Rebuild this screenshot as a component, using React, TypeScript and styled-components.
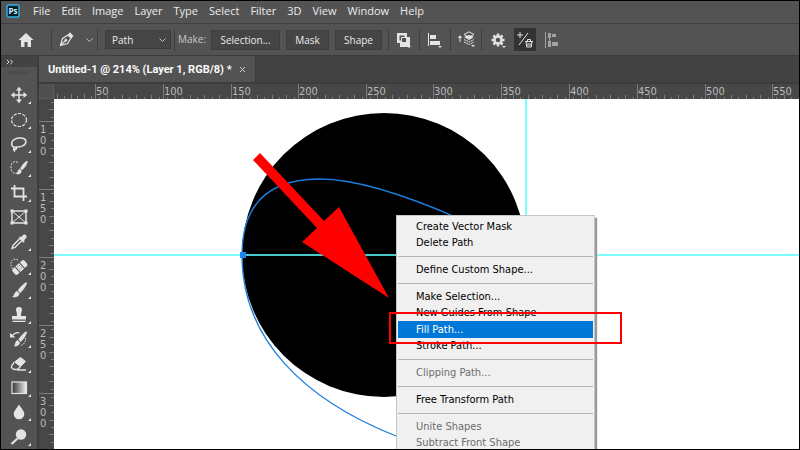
import React from "react";
import styled, { createGlobalStyle } from "styled-components";

const ui = `"Open Sans", "Noto Sans", sans-serif`;
const compact = `"DejaVu Sans Condensed", "DejaVu Sans", sans-serif`;

const Global = createGlobalStyle`
  * { box-sizing: border-box; }
  body { margin: 0; background: #000; font-family: ${ui}; }
  button, select { font: inherit; color: inherit; border: 0; margin: 0; padding: 0; background: none; border-radius: 0; }
  svg { display: block; }
`;

const Window = styled.div`
  height: 100vh;
  display: flex;
  flex-direction: column;
  border: 1px solid #000;
  background: #424242;
  color: #ececec;
  overflow: hidden;
`;

const MenuBar = styled.nav`
  flex: none;
  height: 23px;
  display: flex;
  align-items: center;
  padding: 0 0 2px 5px;
  background: #535353;
  border-bottom: 1px solid #404040;
`;

const MenuItems = styled.div`
  display: flex;
  gap: 11px;
  margin-left: 13px;
`;

const MenuButton = styled.button`
  font-size: 11px;
  font-weight: 500;
  line-height: 20px;
`;

const OptionsBar = styled.div`
  flex: none;
  height: 32px;
  display: flex;
  align-items: center;
  background: #535353;
  border-bottom: 1px solid #3c3c3c;
`;

const Divider = styled.span`
  flex: none;
  width: 1px;
  height: 22px;
  background: #3f3f3f;
`;

const IconButton = styled.button<{ $width: number; $active?: boolean }>`
  flex: none;
  width: ${(p) => p.$width}px;
  height: 23px;
  display: flex;
  align-items: center;
  justify-content: center;
  background: ${(p) => (p.$active ? "#333" : "transparent")};
`;

const SelectBox = styled.div`
  flex: none;
  display: grid;
  align-items: center;
  width: 64px;
  height: 17px;
  margin: 0 4px 0 8px;
  background: #454545;
  outline: 1px solid #3d3d3d;
  & > * { grid-area: 1 / 1; }
  & > svg { justify-self: end; margin-right: 3px; pointer-events: none; }
`;

const ModeSelect = styled.select`
  appearance: none;
  width: 100%;
  height: 17px;
  padding-left: 6px;
  font-size: 10px;
  line-height: 16px;
`;

const OptionLabel = styled.span`
  width: 33px;
  margin: 0 0 1px 3px;
  font-size: 10px;
  color: #c8c8c8;
`;

const ActionButton = styled.button<{ $width: number }>`
  flex: none;
  width: ${(p) => p.$width}px;
  height: 20px;
  margin-right: 6px;
  background: #454545;
  border: 1px solid #3d3d3d;
  font-size: 10px;
  line-height: 16px;
`;

const Workspace = styled.div`
  flex: 1;
  min-height: 0;
  display: flex;
`;

const Toolbox = styled.aside`
  flex: none;
  width: 38px;
  display: flex;
  flex-direction: column;
  background: #535353;
  border-right: 2px solid #3c3c3c;
`;

const ToolboxHeader = styled.button`
  height: 11px;
  flex: none;
  background: #434343;
  padding-left: 5px;
`;

const Grip = styled.span`
  flex: none;
  height: 3px;
  width: 20px;
  margin: 4px 0 9px 8px;
  background: repeating-linear-gradient(90deg, #454545 0 1px, transparent 1px 2px);
`;

const Tool = styled.button`
  flex: 1 1 0;
  min-height: 24px;
  max-height: 32px;
  display: flex;
  align-items: center;
  padding-left: 7px;
`;

const DocumentArea = styled.main`
  flex: 1;
  min-width: 0;
  display: flex;
  flex-direction: column;
`;

const TabStrip = styled.div`
  flex: none;
  height: 28px;
  display: flex;
  border-bottom: 2px solid #3c3c3c;
`;

const DocumentTab = styled.div`
  display: flex;
  align-items: center;
  gap: 7px;
  padding: 0 9px;
  background: #535353;
  border-right: 1px solid #3c3c3c;
  font-family: Roboto, ${ui};
  font-size: 11px;
  font-weight: 700;
  color: #fafafa;
  white-space: nowrap;
`;

const CloseButton = styled.button`
  padding-top: 1px;
`;

const RulerRow = styled.div`
  flex: none;
  height: 15px;
  display: flex;
  background: #474747;
`;

const RulerCorner = styled.div`
  flex: none;
  width: 15px;
  border-right: 1px dotted #6a6a6a;
  border-bottom: 1px dotted #6a6a6a;
  background: #505050;
`;

const HRuler = styled.div`
  flex: 1;
  min-width: 0;
  display: flex;
  overflow: hidden;
`;

const HSegment = styled.div<{ $size: number }>`
  flex: none;
  width: ${(p) => p.$size}px;
  display: grid;
  border-left: 1px solid #7c7c7c;
  & > * { grid-area: 1 / 1; }
`;

const HLead = styled(HSegment)`
  border-left: 0;
`;

const HTicks = styled.div`
  display: flex;
  align-items: flex-end;
  justify-content: space-around;
`;

const HTick = styled.i<{ $long: boolean }>`
  width: 1px;
  height: ${(p) => (p.$long ? 5 : 3)}px;
  background: #7c7c7c;
`;

const HLabel = styled.span`
  justify-self: start;
  align-self: start;
  font-family: ${compact};
  font-size: 11px;
  line-height: 16px;
  color: #bababa;
`;

const CanvasRow = styled.div`
  flex: 1;
  min-height: 0;
  display: flex;
`;

const VRuler = styled.div`
  flex: none;
  width: 15px;
  display: flex;
  flex-direction: column;
  overflow: hidden;
  background: #474747;
`;

const VSegment = styled.div<{ $size: number }>`
  flex: none;
  height: ${(p) => p.$size}px;
  display: flex;
  justify-content: space-between;
  border-top: 1px solid #7c7c7c;
`;

const VLead = styled(VSegment)`
  border-top: 0;
  justify-content: flex-end;
`;

const VTicks = styled.div`
  display: flex;
  flex-direction: column;
  align-items: flex-end;
  justify-content: space-around;
`;

const VTick = styled.i<{ $long: boolean }>`
  height: 1px;
  width: ${(p) => (p.$long ? 5 : 3)}px;
  background: #7c7c7c;
`;

const VLabel = styled.span`
  width: 8px;
  padding: 2px 0 0 1px;
  font-family: ${compact};
  font-size: 11px;
  line-height: 11px;
  color: #bababa;
  word-break: break-all;
`;

const Canvas = styled.section`
  position: relative;
  flex: 1;
  min-width: 0;
  overflow: hidden;
  background: #fff;
`;

const Artwork = styled.svg`
  position: absolute;
  top: 0;
  left: 0;
  width: 100%;
  height: 100%;
`;

const ContextMenu = styled.div`
  position: absolute;
  top: 116px;
  left: 342px;
  width: 199px;
  padding: 3px 1px;
  background: #f0f0f0;
  border: 1px solid #c4c4c4;
  box-shadow: 2px 3px 1px #999;
  font-family: ${compact};
  font-size: 11px;
  color: #000;
`;

const ContextItem = styled.button<{ $selected?: boolean }>`
  display: block;
  width: 100%;
  height: ${(p) => (p.$selected ? 17 : 16)}px;
  padding-left: 18px;
  text-align: left;
  line-height: 16px;
  white-space: nowrap;
  color: ${(p) => (p.$selected ? "#fff" : "#000")};
  background: ${(p) => (p.$selected ? "#0078d7" : "transparent")};
  &:disabled { color: #6d6d6d; }
`;

const Separator = styled.hr`
  height: 1px;
  margin: 5px 0;
  border: 0;
  background: #b4b4b4;
`;

const Highlight = styled.div`
  position: absolute;
  top: 213px;
  left: 335px;
  width: 233px;
  height: 32px;
  border: 2px solid #f00;
  pointer-events: none;
`;

const INK = "#e4e4e4";
const Corner = ({ x, y }: { x: number; y: number }) => (
  <path d={`M${x} ${y}v-3l-3 3z`} fill={INK} />
);

const Chevron = () => (
  <svg width="9" height="6" viewBox="0 0 9 6" fill="none" stroke="#c0c0c0">
    <path d="M1.5 1.5l3 3 3-3" />
  </svg>
);

const toolIcons: [string, React.ReactNode][] = [
  ["Move", <g><path d="M11 4v14M4 11h14" strokeWidth="1.500" /><path d="M8 6.500l3-3.700 3 3.700zM8 15.500l3 3.700 3-3.700zM6.500 8L2.800 11l3.700 3zM15.500 8l3.700 3-3.700 3z" fill={INK} stroke="none" /></g>],
  ["Elliptical marquee", <ellipse cx="11" cy="11" rx="7.500" ry="6.500" strokeWidth="1.200" strokeDasharray="3.200 1.300" />],
  ["Lasso", <path strokeWidth="1.500" d="M6.500 14.500C3 13 2.500 8.500 6.500 6.300c4-2.200 10.500-1.600 11.300 1.500.8 3.600-4 6.400-8.300 6.200-3-.2-4 .5-3.500 1.800.5 1 2.500 1 2.500-.3s-2.200-1.500-2.800 0c-.4 1.400.4 2 1.300 3" />],
  ["Quick selection", <g><path d="M10 5.500C6 3.500 3 5.500 3 10s2 7 6 6" strokeDasharray="2 1.200" /><path d="M18.800 4l.8.800c-1 3.200-3 6.200-5.600 8.200l-1.600-1.600c1.500-3 3.600-5.600 6.400-7.400zM11.600 12l1.900 1.900c-.3 2.700-2.500 3.600-5 3.100 1.500-.8 1-4.200 3.100-5z" fill={INK} strokeWidth=".4" /></g>],
  ["Crop", <path strokeWidth="1.800" d="M6.500 3v11.500H19M3 6.500h12.500V19" />],
  ["Frame", <g><rect x="4" y="5" width="14" height="12" strokeWidth="1.500" /><path d="M4 5l14 12M18 5l-14 12" /><path d="M2.500 3.500h3v3h-3zM16.500 3.500h3v3h-3zM2.500 15.500h3v3h-3zM16.500 15.500h3v3h-3z" fill={INK} stroke="none" /></g>],
  ["Eyedropper", <g><path d="M17.500 4c1.200 1 1 2.500 0 3.500l-1.800 1.700.8 1-1.200 1.200-4.500-4.500L12 5.700l1 .8 1.500-1.700c1-1 2-1.500 3-.8z" fill={INK} strokeWidth=".5" /><path d="M11.500 8L5 14.500l-1 3 3-1 6.500-6.500" strokeWidth="1.400" /></g>],
  ["Healing brush", <g><path d="M10 5C6 3 3 5 3 8.500S4 13 5 13.500" strokeDasharray="1.500 1.200" /><g transform="rotate(-42 12 12)"><rect x="3.500" y="8.500" width="16" height="7.500" rx="2" fill={INK} stroke="none" /><path d="M8.500 8v9M14.500 8v9" stroke="#535353" /><path d="M10.500 10.500h.1M12.500 10.500h.1M10.500 13.500h.1M12.500 13.500h.1" stroke="#535353" strokeLinecap="round" /></g></g>],
  ["Brush", <path fill={INK} strokeWidth=".5" d="M18 3.500l.8.700c-1.500 3.800-3.900 7.200-6.600 9.500L10 11.500c2-3 4.500-6 8-8zM9.100 12.300l2.200 2.200c-.5 3-3.300 4-6.800 3.500 2-1 1.600-4.800 4.600-5.700z" />],
  ["Clone stamp", <path fill={INK} stroke="none" d="M11 3c2.400 0 3.400 1.700 2.900 3.400-.7 2-1.200 3.800-.7 5.600H18v3.500H4V12h4.800c.5-1.800 0-3.600-.7-5.600C7.600 4.700 8.600 3 11 3zM4.500 16.700h13V18h-13z" />],
  ["History brush", <g><path d="M4 8c3-4 6-3.500 7.500-3" strokeWidth="1.200" /><path d="M2 5v4.500h5.500z" fill={INK} stroke="none" /><path d="M18 3.500l.8.700c-1 3.800-3.400 7.200-6.100 9.500l-2.200-2.200c2-3 4.500-6 7.500-8zM9.600 12.300l2.200 2.200c-.5 3-3.300 4-5.800 3.500 2-1 .6-4.800 3.600-5.700z" fill={INK} strokeWidth=".4" /><path d="M17.500 10c.5 4-2 7-5 7.500" strokeDasharray="1.500 1" /></g>],
  ["Eraser", <g><path d="M12.500 4.500l5 4-5 5-6-4.500z" fill={INK} stroke={INK} strokeLinejoin="round" /><path d="M6 9.500L3.500 13c-.5 1 0 1.500.5 2l2 1.500h3.500l3-3M9.500 17H18" strokeWidth="1.300" /></g>],
  ["Gradient", <g><defs><linearGradient id="toolGradient"><stop stopColor="#333" /><stop offset="1" stopColor="#eee" /></linearGradient></defs><rect x="4" y="5" width="14.500" height="11.500" strokeWidth="1.200" fill="url(#toolGradient)" /></g>],
  ["Blur", <path fill={INK} stroke="none" d="M11 3.500c2.500 4 5.300 6.500 5.300 9.500a5.300 5.300 0 01-10.600 0c0-3 2.800-5.500 5.300-9.500z" />],
  ["Dodge", <g><circle cx="13" cy="8.500" r="5.200" fill={INK} stroke="none" /><path d="M9.500 12.500l-6 5.500" strokeWidth="2.200" /></g>],
];

const contextItems: ({ text: string; disabled?: boolean; selected?: boolean } | null)[] = [
  { text: "Create Vector Mask" },
  { text: "Delete Path" },
  null,
  { text: "Define Custom Shape..." },
  null,
  { text: "Make Selection..." },
  { text: "New Guides From Shape" },
  { text: "Fill Path...", selected: true },
  { text: "Stroke Path..." },
  null,
  { text: "Clipping Path...", disabled: true },
  null,
  { text: "Free Transform Path" },
  null,
  { text: "Unite Shapes", disabled: true },
  { text: "Subtract Front Shape", disabled: true },
];

const columns: [number, number][] = [
  [50, 68], [100, 68], [150, 67], [200, 68], [250, 67], [300, 68],
  [350, 68], [400, 68], [450, 68], [500, 67], [550, 68],
];
const rows: [number, number][] = [[100, 68], [150, 68], [200, 68], [250, 68], [300, 68]];
const ticks = [false, true, false, true, false, true, false, true, false];

export default function App() {
  return (
    <Window>
      <Global />
      <MenuBar>
        <svg width="14" height="14" viewBox="0 0 14 14" aria-label="Photoshop">
          <rect x="1" y="1" width="12" height="12" rx="2" fill="#001d2c" stroke="#2fb4e4" strokeWidth="1.400" />
          <text x="7" y="10" textAnchor="middle" fontFamily="Open Sans" fontWeight="700" fontSize="8" fill="#d6f2ff">Ps</text>
        </svg>
        <MenuItems>
          {["File", "Edit", "Image", "Layer", "Type", "Select", "Filter", "3D", "View", "Window", "Help"].map((m) => (
            <MenuButton key={m}>{m}</MenuButton>
          ))}
        </MenuItems>
      </MenuBar>

      <OptionsBar>
        <IconButton $width={50} aria-label="Home">
          <svg width="16" height="14" viewBox="0 0 16 14" fill={INK}><path d="M8 0l7.500 7H13v7H9.500V9h-3v5H3V7H.5z" /></svg>
        </IconButton>
        <Divider />
        <IconButton $width={29} aria-label="Pen tool">
          <svg width="15" height="15" viewBox="0 0 15 15" fill="none" stroke={INK}>
            <path d="M1.500 13.500L3.500 6.500 9 3l3 3-3.500 5.500zM1.500 13.500l4.700-4.700" strokeWidth="1.200" />
            <circle cx="6.800" cy="8.200" r="1" fill={INK} />
            <path d="M9 3L11 .8 14.200 4 12 6z" fill={INK} />
          </svg>
        </IconButton>
        <IconButton $width={16} aria-label="Tool presets"><Chevron /></IconButton>
        <Divider />
        <SelectBox>
          <ModeSelect aria-label="Tool mode"><option>Path</option></ModeSelect>
          <Chevron />
        </SelectBox>
        <Divider />
        <OptionLabel>Make:</OptionLabel>
        <ActionButton $width={69}>Selection...</ActionButton>
        <ActionButton $width={43}>Mask</ActionButton>
        <ActionButton $width={47}>Shape</ActionButton>
        <Divider />
        <IconButton $width={30} aria-label="Path operations">
          <svg width="16" height="16" viewBox="0 0 16 16" fill={INK}>
            <path fillRule="evenodd" d="M1 1h10v4h3v10h-10v-4H1zM3.500 3.500v5H5V5h3.500V3.500zM6 6v4h4V6z" /><path d="M11 14h4l-2 2z" />
          </svg>
        </IconButton>
        <Divider />
        <IconButton $width={30} aria-label="Path alignment">
          <svg width="16" height="16" viewBox="0 0 16 16" fill={INK}>
            <path d="M1 1h1v13H1zM3 3h6v4H3zM3 9h10v4H3zM11 14h4l-2 2z" />
          </svg>
        </IconButton>
        <Divider />
        <IconButton $width={30} aria-label="Path arrangement">
          <svg width="19" height="17" viewBox="0 0 19 17" fill="none" stroke={INK}>
            <path d="M3 11V5.500" /><path d="M.8 7L3 4.200 5.200 7z" fill={INK} stroke="none" />
            <path d="M12 .8l5 2.700-5 2.700-5-2.700z" />
            <path d="M7 6l5-2 5 2-5 3z" fill={INK} stroke="none" />
            <path d="M7 8.500l5 2.500 5-2.500M7 11l5 2.500 5-2.500" strokeDasharray="2 .6" />
            <path d="M14 14h4l-2 2z" fill={INK} stroke="none" />
          </svg>
        </IconButton>
        <Divider />
        <IconButton $width={32} aria-label="Path options">
          <svg width="16" height="16" viewBox="0 0 16 16" fill="none" stroke={INK}>
            <circle cx="8" cy="8" r="3.600" strokeWidth="2.600" />
            <path d="M8 1.500v2M8 12.500v2M1.500 8h2M12.500 8h2M3.400 3.400l1.400 1.400M11.200 11.200l1.400 1.400M3.400 12.600l1.400-1.400M11.200 4.800l1.400-1.400" strokeWidth="2.400" />
            <path d="M12 14h4l-2 2z" fill={INK} stroke="none" />
          </svg>
        </IconButton>
        <IconButton $width={22} $active aria-label="Auto add or delete">
          <svg width="18" height="17" viewBox="0 0 18 17" fill="none" stroke={INK}>
            <path d="M4 1v6M1 4h6M3 14L12 2" />
            <path d="M9 10.500h8M11.500 10.500V8.500h3v2M10 10.500l.7 5.500h4.600l.7-5.500M12 12v3M14 12v3" />
          </svg>
        </IconButton>
        <IconButton $width={32} aria-label="Align edges">
          <svg width="16" height="16" viewBox="0 0 16 16" fill="#a2a2a2">
            <path d="M1 0h1v16H1zM4 1h3v5H4zM8 2h4v3H8zM4 9h3v6H4zM8 10h6v4H8zM5 6h1v3H5z" />
          </svg>
        </IconButton>
      </OptionsBar>

      <Workspace>
        <Toolbox>
          <ToolboxHeader aria-label="Expand toolbar">
            <svg width="8" height="6" viewBox="0 0 8 6" fill="none" stroke={INK}><path d="M.8.800L3 3 .8 5.200M4.300.800L6.500 3 4.300 5.200" /></svg>
          </ToolboxHeader>
          <Grip />
          {toolIcons.map(([name, icon]) => (
            <Tool key={name} aria-label={name}>
              <svg width="24" height="22" viewBox="0 0 24 22" fill="none" stroke={INK}>
                {icon}
                {name !== "Frame" && <g stroke="none"><Corner x={23} y={20} /></g>}
              </svg>
            </Tool>
          ))}
        </Toolbox>

        <DocumentArea>
          <TabStrip>
            <DocumentTab>
              <span>Untitled-1 @ 214% (Layer 1, RGB/8) *</span>
              <CloseButton aria-label="Close document">
                <svg width="7" height="7" viewBox="0 0 7 7" stroke="#d0d0d0"><path d="M1 1l5 5M6 1L1 6" /></svg>
              </CloseButton>
            </DocumentTab>
          </TabStrip>
          <RulerRow>
            <RulerCorner />
            <HRuler>
              <HLead $size={41}>
                <HTicks>{ticks.slice(3).map((t, i) => <HTick key={i} $long={t} />)}</HTicks>
              </HLead>
              {columns.map(([value, size]) => (
                <HSegment key={value} $size={size}>
                  <HTicks>{ticks.map((t, i) => <HTick key={i} $long={t} />)}</HTicks>
                  <HLabel>{value}</HLabel>
                </HSegment>
              ))}
            </HRuler>
          </RulerRow>
          <CanvasRow>
            <VRuler>
              <VLead $size={22}>
                <VTicks>{[false, true, false].map((t, i) => <VTick key={i} $long={t} />)}</VTicks>
              </VLead>
              {rows.map(([value, size]) => (
                <VSegment key={value} $size={size}>
                  <VLabel>{value}</VLabel>
                  <VTicks>{ticks.map((t, i) => <VTick key={i} $long={t} />)}</VTicks>
                </VSegment>
              ))}
            </VRuler>
            <Canvas>
              <Artwork aria-label="Circle with a path">
                <g transform="translate(-54 -99)">
                  <circle cx="384" cy="255" r="142" />
                  <path d="M54 255H242M526 255H2600M526 99V2000" stroke="#7dfdfd" strokeWidth="2" />
                  <path d="M242 255H526" stroke="#46caca" strokeWidth="2" />
                  <path d="M460 219C410 197 360 179 320 179 272 179 242 200 242 255 242 340 305 400 396 436L412 442" fill="none" stroke="#1c7fe0" strokeWidth="1.300" />
                  <rect x="240" y="252" width="6" height="6" fill="#1c86ee" />
                  <path d="M260 153L324 221 339 207 389 298 302 242 317 228 253 160z" fill="#f00" />
                </g>
              </Artwork>
              <ContextMenu role="menu">
                {contextItems.map((item, i) =>
                  item ? (
                    <ContextItem key={i} role="menuitem" $selected={item.selected} disabled={item.disabled}>{item.text}</ContextItem>
                  ) : (
                    <Separator key={i} />
                  )
                )}
              </ContextMenu>
              <Highlight />
            </Canvas>
          </CanvasRow>
        </DocumentArea>
      </Workspace>
    </Window>
  );
}
